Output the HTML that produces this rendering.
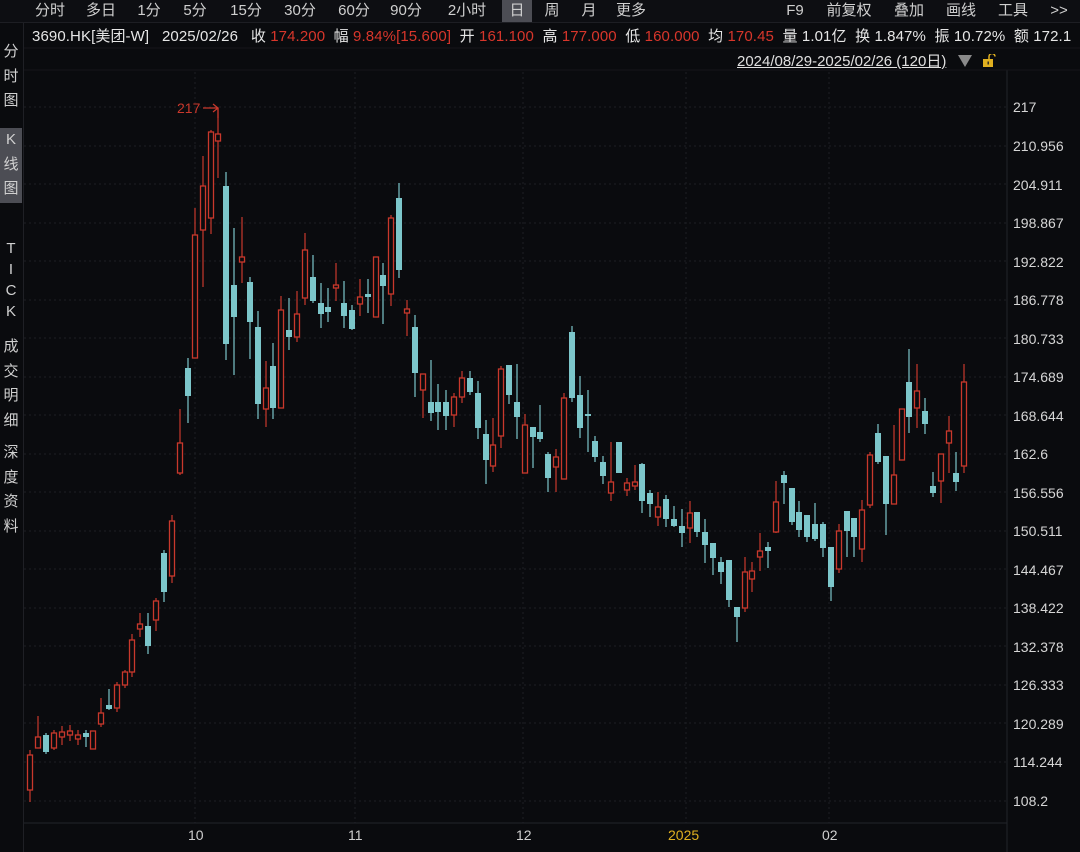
<!DOCTYPE html>
<html><head><meta charset="utf-8"><style>
body{margin:0;width:1080px;height:852px;background:#0a0b0e;overflow:hidden;font-family:"Liberation Sans","Noto Sans CJK SC",sans-serif;color:#d8d8d8;position:relative}
.tb{position:absolute;top:0;left:0;width:1080px;height:22px;background:#0d0e12;border-bottom:1px solid #1d1e23}
.tb span{position:absolute;top:0;height:22px;line-height:22px;font-size:15px;color:#cfcfcf;text-align:center}
.info{position:absolute;top:25px;left:32px;font-size:15px;white-space:nowrap;color:#e6e6e6;letter-spacing:0.1px}
.info b{font-weight:normal;color:#d8362b}
.side{position:absolute;left:0;top:23px;width:23px;height:829px;border-right:1px solid #1f2025}
.side div{position:absolute;left:0;width:22px;text-align:center;font-size:15px;line-height:24.5px;color:#d0d0d0}
.ax{position:absolute;left:1013px;font-size:14px;color:#d6d6d6}
.mx{position:absolute;top:827px;font-size:14px;color:#cfcfcf}
</style></head><body>
<div class="tb">
<span style="left:26px;width:48px">分时</span>
<span style="left:76px;width:50px">多日</span>
<span style="left:130px;width:38px">1分</span>
<span style="left:173px;width:44px">5分</span>
<span style="left:220px;width:52px">15分</span>
<span style="left:274px;width:52px">30分</span>
<span style="left:328px;width:52px">60分</span>
<span style="left:380px;width:52px">90分</span>
<span style="left:434px;width:66px">2小时</span>
<span style="left:502px;width:30px;background:#4c4d54">日</span>
<span style="left:536px;width:32px">周</span>
<span style="left:572px;width:34px">月</span>
<span style="left:608px;width:46px">更多</span>
<span style="left:780px;width:30px">F9</span>
<span style="left:818px;width:62px">前复权</span>
<span style="left:884px;width:50px">叠加</span>
<span style="left:936px;width:50px">画线</span>
<span style="left:988px;width:50px">工具</span>
<span style="left:1044px;width:30px">&gt;&gt;</span>
</div>
<div class="info">3690.HK[美团-W]&nbsp;&nbsp; 2025/02/26&nbsp;&nbsp; 收 <b>174.200</b>&nbsp; 幅 <b>9.84%[15.600]</b>&nbsp; 开 <b>161.100</b>&nbsp; 高 <b>177.000</b>&nbsp; 低 <b>160.000</b>&nbsp; 均 <b>170.45</b>&nbsp; 量 1.01亿&nbsp; 换 1.847%&nbsp; 振 10.72%&nbsp; 额 172.1</div>
<div style="position:absolute;top:50px;left:737px;font-size:15px;text-decoration:underline;color:#e0e0e0">2024/08/29-2025/02/26 (120日)</div>
<svg style="position:absolute;left:957px;top:54px" width="40" height="14"><path d="M1 1h14l-7 12z" fill="#8a8a8a"/><rect x="26" y="5" width="10" height="8" fill="#e0b020"/><path d="M32 5V2.5a3 3 0 0 1 6 0" stroke="#e0b020" stroke-width="1.5" fill="none"/><rect x="30.5" y="7.5" width="1.4" height="3" fill="#222"/></svg>
<div class="side">
<div style="top:17px;height:75px">分<br>时<br>图</div>
<div style="top:105px;height:75px;background:#4c4d54">K<br>线<br>图</div>
<div style="top:215px;height:85px;line-height:21px">T<br>I<br>C<br>K</div>
<div style="top:312px">成<br>交<br>明<br>细</div>
<div style="top:418px">深<br>度<br>资<br>料</div>
</div>
<svg id="ch" style="position:absolute;left:0;top:0" width="1080" height="852"></svg>
<div class="ax" style="top:99px">217</div>
<div class="ax" style="top:138px">210.956</div>
<div class="ax" style="top:177px">204.911</div>
<div class="ax" style="top:215px">198.867</div>
<div class="ax" style="top:254px">192.822</div>
<div class="ax" style="top:292px">186.778</div>
<div class="ax" style="top:331px">180.733</div>
<div class="ax" style="top:369px">174.689</div>
<div class="ax" style="top:408px">168.644</div>
<div class="ax" style="top:446px">162.6</div>
<div class="ax" style="top:485px">156.556</div>
<div class="ax" style="top:523px">150.511</div>
<div class="ax" style="top:562px">144.467</div>
<div class="ax" style="top:600px">138.422</div>
<div class="ax" style="top:639px">132.378</div>
<div class="ax" style="top:677px">126.333</div>
<div class="ax" style="top:716px">120.289</div>
<div class="ax" style="top:754px">114.244</div>
<div class="ax" style="top:793px">108.2</div>
<div class="mx" style="left:188px">10</div>
<div class="mx" style="left:348px">11</div>
<div class="mx" style="left:516px">12</div>
<div class="mx" style="left:668px;color:#e0b020">2025</div>
<div class="mx" style="left:822px">02</div>
<script>
var d=[[30,750,802,755,790,'r'],[38,716,745,737,748,'r'],[46,733,754,735,752,'c'],[54,730,750,733,748,'r'],[62,726,745,732,737,'r'],[70,725,741,731,735,'r'],[78,730,745,735,739,'r'],[86,730,747,733,737,'c'],[93,731,749,731,749,'r'],
[101,698,727,713,724,'r'],[109,689,710,705,709,'c'],[117,682,712,685,708,'r'],[125,670,688,672,685,'r'],[132,634,677,640,672,'r'],[140,613,637,624,629,'r'],[148,613,654,626,646,'c'],[156,598,631,601,620,'r'],[164,550,602,553,592,'c'],[172,515,583,521,576,'r'],[180,409,475,443,473,'r'],[188,358,423,368,396,'c'],[195,208,358,235,358,'r'],[203,156,287,186,230,'r'],[211,130,234,132,218,'r'],[218,108,178,134,141,'r'],
[226,172,360,186,344,'c'],[234,228,375,285,317,'c'],[242,217,283,257,262,'r'],[250,277,359,282,322,'c'],[258,311,419,327,404,'c'],[266,361,427,388,409,'r'],[273,343,419,366,408,'c'],[281,296,408,310,408,'r'],[289,298,350,330,337,'c'],[297,291,342,314,337,'r'],[305,233,305,250,298,'r'],[313,255,303,277,301,'c'],[321,283,328,303,314,'c'],[328,288,322,307,312,'c'],[336,263,301,285,288,'r'],[344,281,328,303,316,'c'],[352,305,330,310,329,'c'],[360,279,316,297,304,'r'],[368,279,313,294,297,'c'],[376,257,317,257,317,'r'],[383,263,324,275,286,'c'],[391,215,306,218,294,'r'],[399,183,278,198,270,'c'],[407,300,336,309,313,'r'],[415,315,397,327,373,'c'],[423,374,418,374,390,'r'],[431,360,421,402,413,'c'],[438,384,430,402,412,'c'],[446,390,430,402,416,'c'],[454,393,427,397,415,'r'],[462,371,403,378,397,'r'],[470,371,395,378,392,'c'],[478,381,439,393,428,'c'],[486,420,484,434,460,'c'],[493,418,472,445,466,'r'],[501,366,448,369,436,'r'],[509,365,404,365,395,'c'],[517,364,439,402,417,'c'],[525,414,473,425,473,'r'],[533,427,468,427,437,'c'],[540,405,442,432,439,'c'],[548,452,492,454,478,'c'],[556,449,492,457,467,'r'],[564,393,479,398,479,'r'],[572,326,402,332,398,'c'],[580,376,438,395,428,'c'],[588,390,452,414,416,'c'],[595,436,462,441,457,'c'],[603,456,484,462,476,'c'],[611,442,501,482,493,'r'],[619,442,473,442,473,'c'],[627,478,496,483,490,'r'],[635,465,490,482,486,'r'],[642,463,513,464,501,'c'],[650,490,517,493,504,'c'],[658,492,526,507,517,'r'],[666,495,527,499,519,'c'],[674,506,527,519,526,'c'],
[682,509,547,526,533,'c'],[690,501,543,513,528,'r'],[697,512,537,512,532,'c'],[705,519,563,532,545,'c'],[713,543,575,543,558,'c'],[721,557,584,562,572,'c'],[729,560,607,560,600,'c'],[737,607,642,607,617,'c'],[745,557,612,572,608,'r'],[752,562,592,571,579,'r'],[760,533,571,551,557,'r'],[768,542,568,547,551,'c'],[776,481,533,502,532,'r'],[784,471,504,475,483,'c'],[792,488,525,488,522,'c'],[799,501,537,512,530,'c'],[807,515,542,515,537,'c'],[815,503,541,524,539,'c'],[823,522,557,524,548,'c'],[831,547,601,547,587,'c'],[839,524,573,531,569,'r'],[847,511,557,511,531,'c'],[854,518,557,518,537,'c'],[862,500,562,510,549,'r'],[870,452,508,455,505,'r'],[878,424,464,433,462,'c'],[886,456,535,456,504,'c'],[894,425,504,475,504,'r'],[902,409,460,409,460,'r'],[909,349,433,382,417,'c'],[917,364,428,391,408,'r'],[925,398,434,411,424,'c'],[933,472,497,486,493,'c'],[941,454,503,454,481,'r'],[949,416,473,431,443,'r'],[956,452,491,473,482,'c'],[964,364,473,382,466,'r']];
var s='';
var gy=[107,146,184,223,261,300,338,377,415,454,492,531,569,608,646,685,723,762,801];
gy.forEach(function(y){s+='<line x1="24" y1="'+y+'" x2="1007" y2="'+y+'" stroke="#1d1f24" stroke-dasharray="2,3"/>';});
[195,355,523,686,829].forEach(function(x){s+='<line x1="'+x+'" y1="72" x2="'+x+'" y2="823" stroke="#1d1f24" stroke-dasharray="2,3"/>';});
s+='<line x1="1007" y1="70" x2="1007" y2="852" stroke="#22242a"/><line x1="24" y1="823" x2="1007" y2="823" stroke="#22242a"/><line x1="24" y1="70" x2="1080" y2="70" stroke="#15161a"/><line x1="24" y1="48" x2="1080" y2="48" stroke="#15161a"/>';
d.forEach(function(c){var x=c[0],col=c[5]=='r'?'#c9382c':'#7cc6ca';
s+='<line x1="'+x+'" y1="'+c[1]+'" x2="'+x+'" y2="'+c[2]+'" stroke="'+col+'" stroke-width="1.2"/>';
var h=Math.max(c[4]-c[3],2);
if(c[5]=='r')s+='<rect x="'+(x-2.5)+'" y="'+c[3]+'" width="5" height="'+h+'" fill="#0a0b0e" stroke="'+col+'" stroke-width="1.3"/>';
else s+='<rect x="'+(x-3)+'" y="'+c[3]+'" width="6" height="'+h+'" fill="'+col+'"/>';});
s+='<text x="177" y="113" fill="#c9382c" font-size="14" font-family="Liberation Sans">217</text><path d="M203 108h15v10M213 104l5 4-5 4" stroke="#c9382c" fill="none" stroke-width="1.2"/>';
document.getElementById('ch').innerHTML=s;
</script>
</body></html>
